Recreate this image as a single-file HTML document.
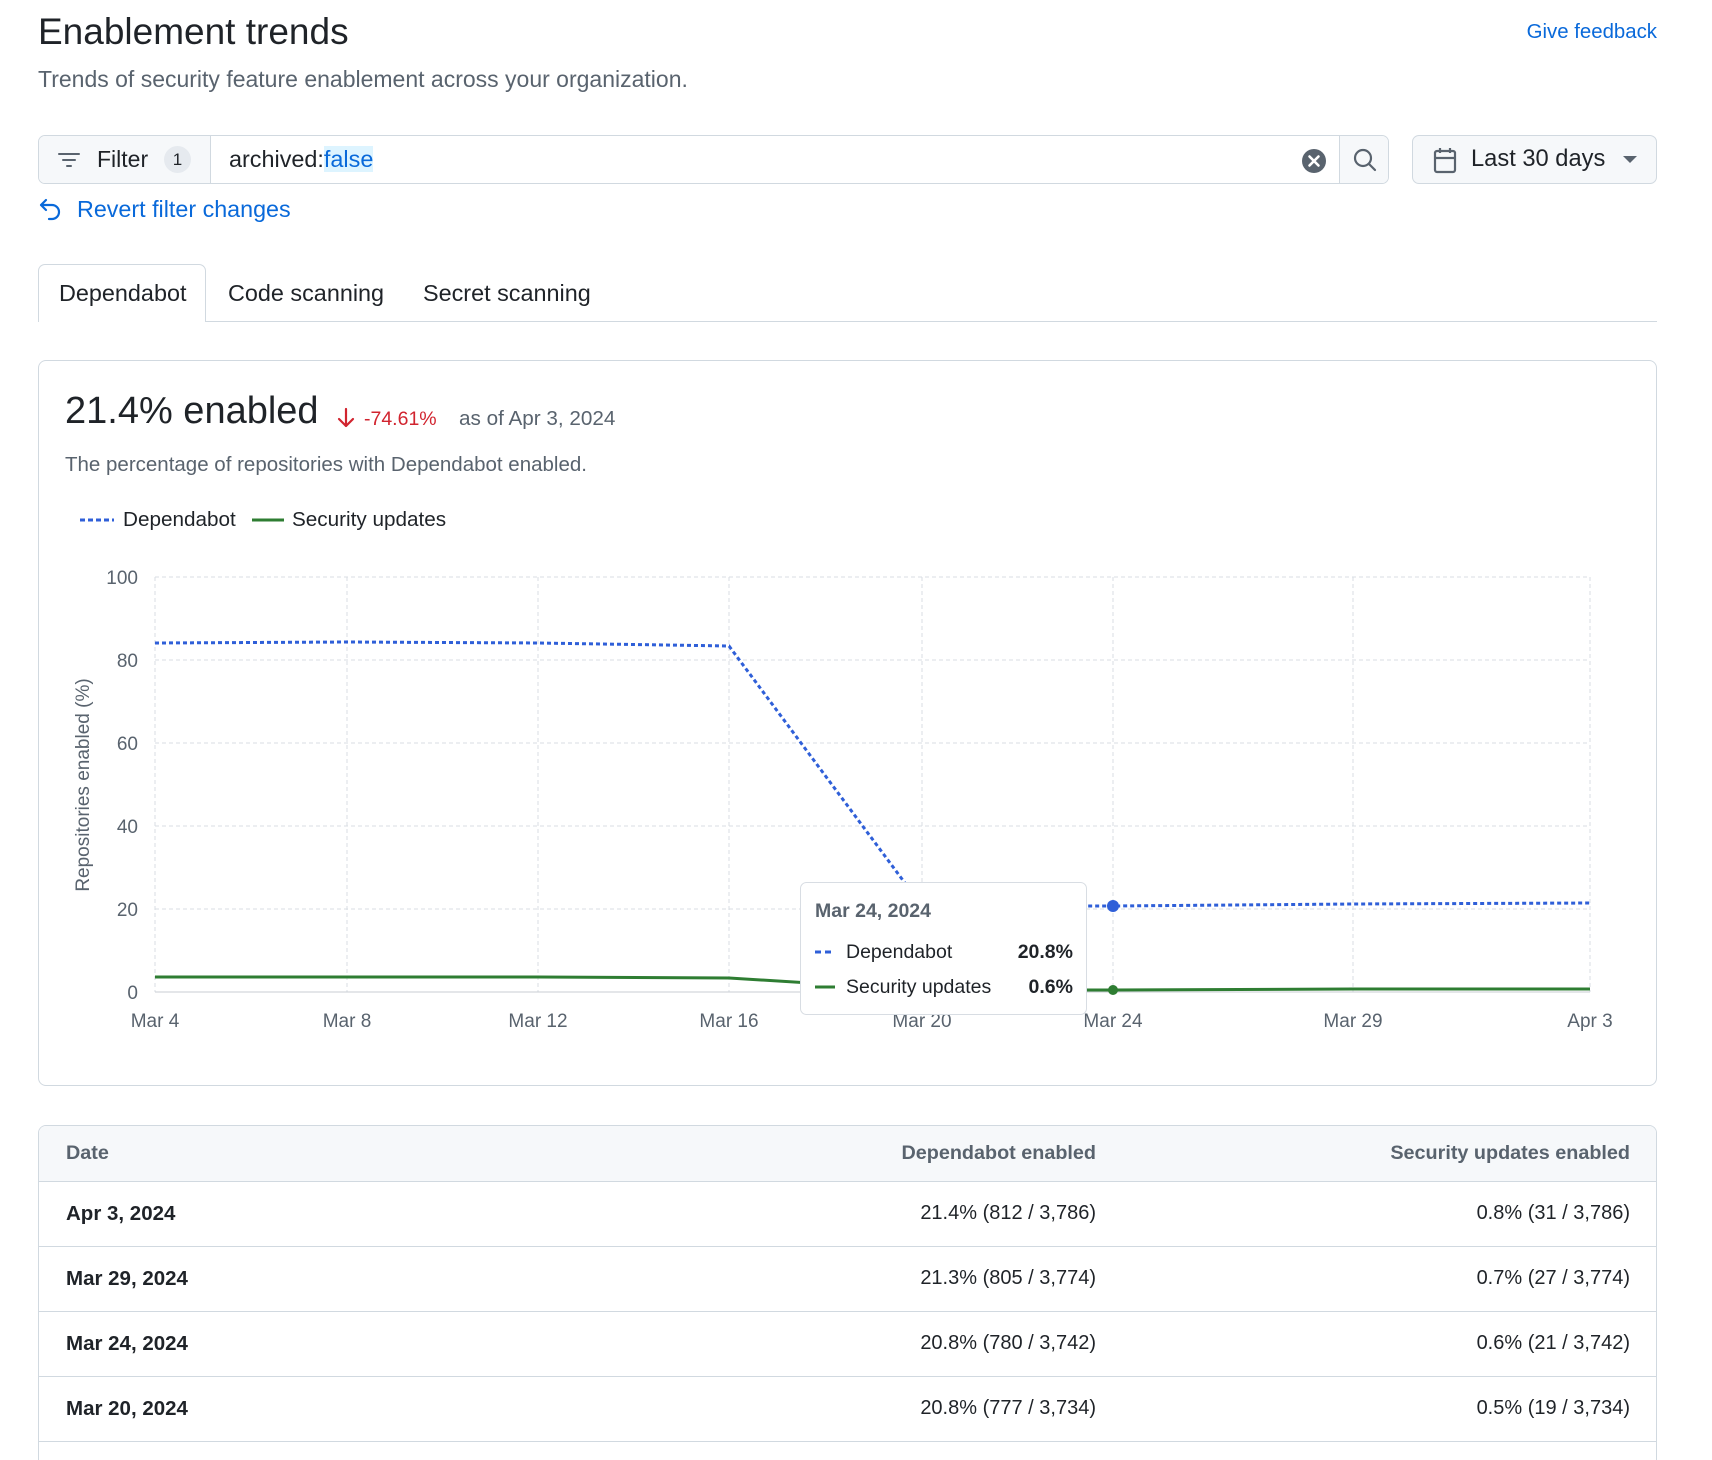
<!DOCTYPE html>
<html style="width:1712px;height:1460px;overflow:hidden"><head><meta charset="utf-8"><style>
*{box-sizing:border-box;margin:0;padding:0}
body{width:1712px;height:1460px;overflow:hidden;background:#fff;font-family:"Liberation Sans",sans-serif;color:#1f2328;position:relative}
.a{position:absolute}
.blue{color:#0969da}
</style></head><body>
<div class="a" style="left:38px;top:11px;font-size:37px;">Enablement trends</div>
<div class="a" style="left:38px;top:66px;font-size:23px;color:#59636e">Trends of security feature enablement across your organization.</div>
<div class="a blue" style="right:55px;top:21px;font-size:20.4px;">Give feedback</div>

<div class="a" style="left:38px;top:135px;width:1351px;height:49px;border:1px solid #d1d9e0;border-radius:7px;overflow:hidden">
 <div class="a" style="left:0;top:0;width:172px;height:47px;background:#f6f8fa;border-right:1px solid #d1d9e0"></div>
 <svg class="a" style="left:18px;top:12px" width="24" height="24" viewBox="0 0 24 24"><path d="M2 6h20M6 12h12M10 18h4" stroke="#59636e" stroke-width="2" stroke-linecap="round"/></svg>
 <div class="a" style="left:58px;top:10px;font-size:23px;">Filter</div>
 <div class="a" style="left:125px;top:10px;width:27px;height:27px;border-radius:14px;background:#e6eaef;font-size:17px;text-align:center;line-height:27px">1</div>
 <div class="a" style="left:190px;top:10px;font-size:23.4px;">archived:<span style="color:#0969da;background:#ddf4ff">false</span></div>
 <svg class="a" style="left:1262px;top:12px" width="26" height="26" viewBox="0 0 26 26"><circle cx="13" cy="13" r="12" fill="#59636e"/><path d="M8.5 8.5l9 9M17.5 8.5l-9 9" stroke="#fff" stroke-width="2.6" stroke-linecap="round"/></svg>
 <div class="a" style="left:1300px;top:0;width:51px;height:47px;background:#f6f8fa;border-left:1px solid #d1d9e0"></div>
 <svg class="a" style="left:1313px;top:11px" width="26" height="26" viewBox="0 0 26 26"><circle cx="11" cy="11" r="8" fill="none" stroke="#59636e" stroke-width="2.2"/><path d="M17 17l6 6" stroke="#59636e" stroke-width="2.2" stroke-linecap="round"/></svg>
</div>
<div class="a" style="left:1412px;top:135px;width:245px;height:49px;border:1px solid #d1d9e0;border-radius:7px;background:#f6f8fa">
 <svg class="a" style="left:20px;top:11px" width="24" height="27" viewBox="0 0 24 27"><rect x="2" y="4" width="20" height="21" rx="2" fill="none" stroke="#59636e" stroke-width="2.2"/><path d="M2 11h20M7 1v5M17 1v5" stroke="#59636e" stroke-width="2.2"/></svg>
 <div class="a" style="left:58px;top:10px;font-size:23.7px;">Last 30 days</div>
 <svg class="a" style="left:210px;top:20px" width="14" height="8"><path d="M0 0h14L7 7z" fill="#59636e"/></svg>
</div>
<svg class="a" style="left:38px;top:196px" width="26" height="26" viewBox="0 0 26 26"><path d="M8 4L3 9l5 5M3 9h11a7 7 0 0 1 0 14h-3" fill="none" stroke="#0969da" stroke-width="2.2" stroke-linecap="round" stroke-linejoin="round"/></svg>
<div class="a blue" style="left:77px;top:196px;font-size:23.3px;">Revert filter changes</div>

<div class="a" style="left:38px;top:321px;width:1619px;border-top:1px solid #d1d9e0"></div>
<div class="a" style="left:38px;top:264px;width:168px;height:58px;border:1px solid #d1d9e0;border-bottom:none;border-radius:7px 7px 0 0;background:#fff"></div>
<div class="a" style="left:59px;top:280px;font-size:23.4px;">Dependabot</div>
<div class="a" style="left:228px;top:280px;font-size:23.4px;">Code scanning</div>
<div class="a" style="left:423px;top:280px;font-size:23.4px;">Secret scanning</div>

<div class="a" style="left:38px;top:360px;width:1619px;height:726px;border:1px solid #d1d9e0;border-radius:8px"></div>
<div class="a" style="left:65px;top:390px;font-size:38px;">21.4% enabled</div>
<svg class="a" style="left:337px;top:407px" width="18" height="22" viewBox="0 0 18 22"><path d="M9 2v17M2 12l7 7 7-7" fill="none" stroke="#d1242f" stroke-width="2.2" stroke-linecap="round" stroke-linejoin="round"/></svg>
<div class="a" style="left:364px;top:408px;font-size:19.5px;color:#d1242f">-74.61%</div>
<div class="a" style="left:459px;top:407px;font-size:20.7px;color:#59636e">as of Apr 3, 2024</div>
<div class="a" style="left:65px;top:453px;font-size:20.5px;color:#59636e">The percentage of repositories with Dependabot enabled.</div>
<svg class="a" style="left:80px;top:517px" width="34" height="6"><path d="M0 3h34" stroke="#2f5fd8" stroke-width="3" stroke-dasharray="5 3"/></svg>
<div class="a" style="left:123px;top:508px;font-size:20.7px;">Dependabot</div>
<svg class="a" style="left:252px;top:517px" width="32" height="6"><path d="M0 3h32" stroke="#2e7d32" stroke-width="3"/></svg>
<div class="a" style="left:292px;top:508px;font-size:20.7px;">Security updates</div>

<svg class="a" style="left:0;top:0" width="1712" height="1100" font-family="Liberation Sans, sans-serif">
 <g stroke="#d8dde3" stroke-dasharray="4 3" stroke-width="1">
  <path d="M155 577H1590M155 660H1590M155 743H1590M155 826H1590M155 909H1590"/>
  <path d="M155 577V992M347 577V992M538 577V992M729 577V992M922 577V992M1113 577V992M1353 577V992M1590 577V992"/>
 </g>
 <path d="M155 992H1590" stroke="#c8cdd3"/>
 <g font-size="19" fill="#59636e" text-anchor="end">
  <text x="138" y="584">100</text><text x="138" y="667">80</text><text x="138" y="750">60</text><text x="138" y="833">40</text><text x="138" y="916">20</text><text x="138" y="999">0</text>
 </g>
 <text transform="translate(89 785) rotate(-90)" font-size="19" fill="#59636e" text-anchor="middle">Repositories enabled (%)</text>
 <g font-size="19" fill="#59636e" text-anchor="middle">
  <text x="155" y="1027">Mar 4</text><text x="347" y="1027">Mar 8</text><text x="538" y="1027">Mar 12</text><text x="729" y="1027">Mar 16</text><text x="922" y="1027">Mar 20</text><text x="1113" y="1027">Mar 24</text><text x="1353" y="1027">Mar 29</text><text x="1590" y="1027">Apr 3</text>
 </g>
 <path d="M155 643L347 642L538 643L729 646L922 906L1113 906L1353 904L1590 903" fill="none" stroke="#2f5fd8" stroke-width="3" stroke-dasharray="4 3"/>
 <path d="M155 977L347 977L538 977L729 978L922 990L1113 990L1353 989L1590 989" fill="none" stroke="#2e7d32" stroke-width="3"/>
 <circle cx="1113" cy="906" r="6" fill="#2f5fd8"/>
 <circle cx="1113" cy="990" r="5" fill="#2e7d32"/>
 <rect x="800.5" y="882.5" width="286" height="132" rx="6" fill="#fff" stroke="#d8dde3"/>
 <text x="815" y="917" font-size="19.5" fill="#59636e" font-weight="bold">Mar 24, 2024</text>
 <path d="M815 952h20" stroke="#2f5fd8" stroke-width="3" stroke-dasharray="6 4"/>
 <text x="846" y="958" font-size="19.5" fill="#1f2328">Dependabot</text>
 <text x="1073" y="958" font-size="19.5" fill="#1f2328" font-weight="bold" text-anchor="end">20.8%</text>
 <path d="M815 987h20" stroke="#2e7d32" stroke-width="3"/>
 <text x="846" y="993" font-size="19.5" fill="#1f2328">Security updates</text>
 <text x="1073" y="993" font-size="19.5" fill="#1f2328" font-weight="bold" text-anchor="end">0.6%</text>
</svg>

<div class="a" style="left:38px;top:1125px;width:1619px;height:345px;border:1px solid #d1d9e0;border-bottom:none;border-radius:8px 8px 0 0;overflow:hidden">
 <div style="height:56px;background:#f6f8fa;border-bottom:1px solid #d1d9e0;position:relative;font-size:19.8px;font-weight:bold;color:#59636e">
  <span class="a" style="left:27px;top:16px">Date</span>
  <span class="a" style="right:560px;top:16px">Dependabot enabled</span>
  <span class="a" style="right:26px;top:16px">Security updates enabled</span>
 </div>
 <div style="position:relative;height:65px;border-bottom:1px solid #d1d9e0;font-size:20px"><b class="a" style="left:27px;top:20px;font-size:20.5px">Apr 3, 2024</b><span class="a" style="right:560px;top:20px">21.4% (812 / 3,786)</span><span class="a" style="right:26px;top:20px">0.8% (31 / 3,786)</span></div>
 <div style="position:relative;height:65px;border-bottom:1px solid #d1d9e0;font-size:20px"><b class="a" style="left:27px;top:20px;font-size:20.5px">Mar 29, 2024</b><span class="a" style="right:560px;top:20px">21.3% (805 / 3,774)</span><span class="a" style="right:26px;top:20px">0.7% (27 / 3,774)</span></div>
 <div style="position:relative;height:65px;border-bottom:1px solid #d1d9e0;font-size:20px"><b class="a" style="left:27px;top:20px;font-size:20.5px">Mar 24, 2024</b><span class="a" style="right:560px;top:20px">20.8% (780 / 3,742)</span><span class="a" style="right:26px;top:20px">0.6% (21 / 3,742)</span></div>
 <div style="position:relative;height:65px;border-bottom:1px solid #d1d9e0;font-size:20px"><b class="a" style="left:27px;top:20px;font-size:20.5px">Mar 20, 2024</b><span class="a" style="right:560px;top:20px">20.8% (777 / 3,734)</span><span class="a" style="right:26px;top:20px">0.5% (19 / 3,734)</span></div>
</div>
</body></html>
